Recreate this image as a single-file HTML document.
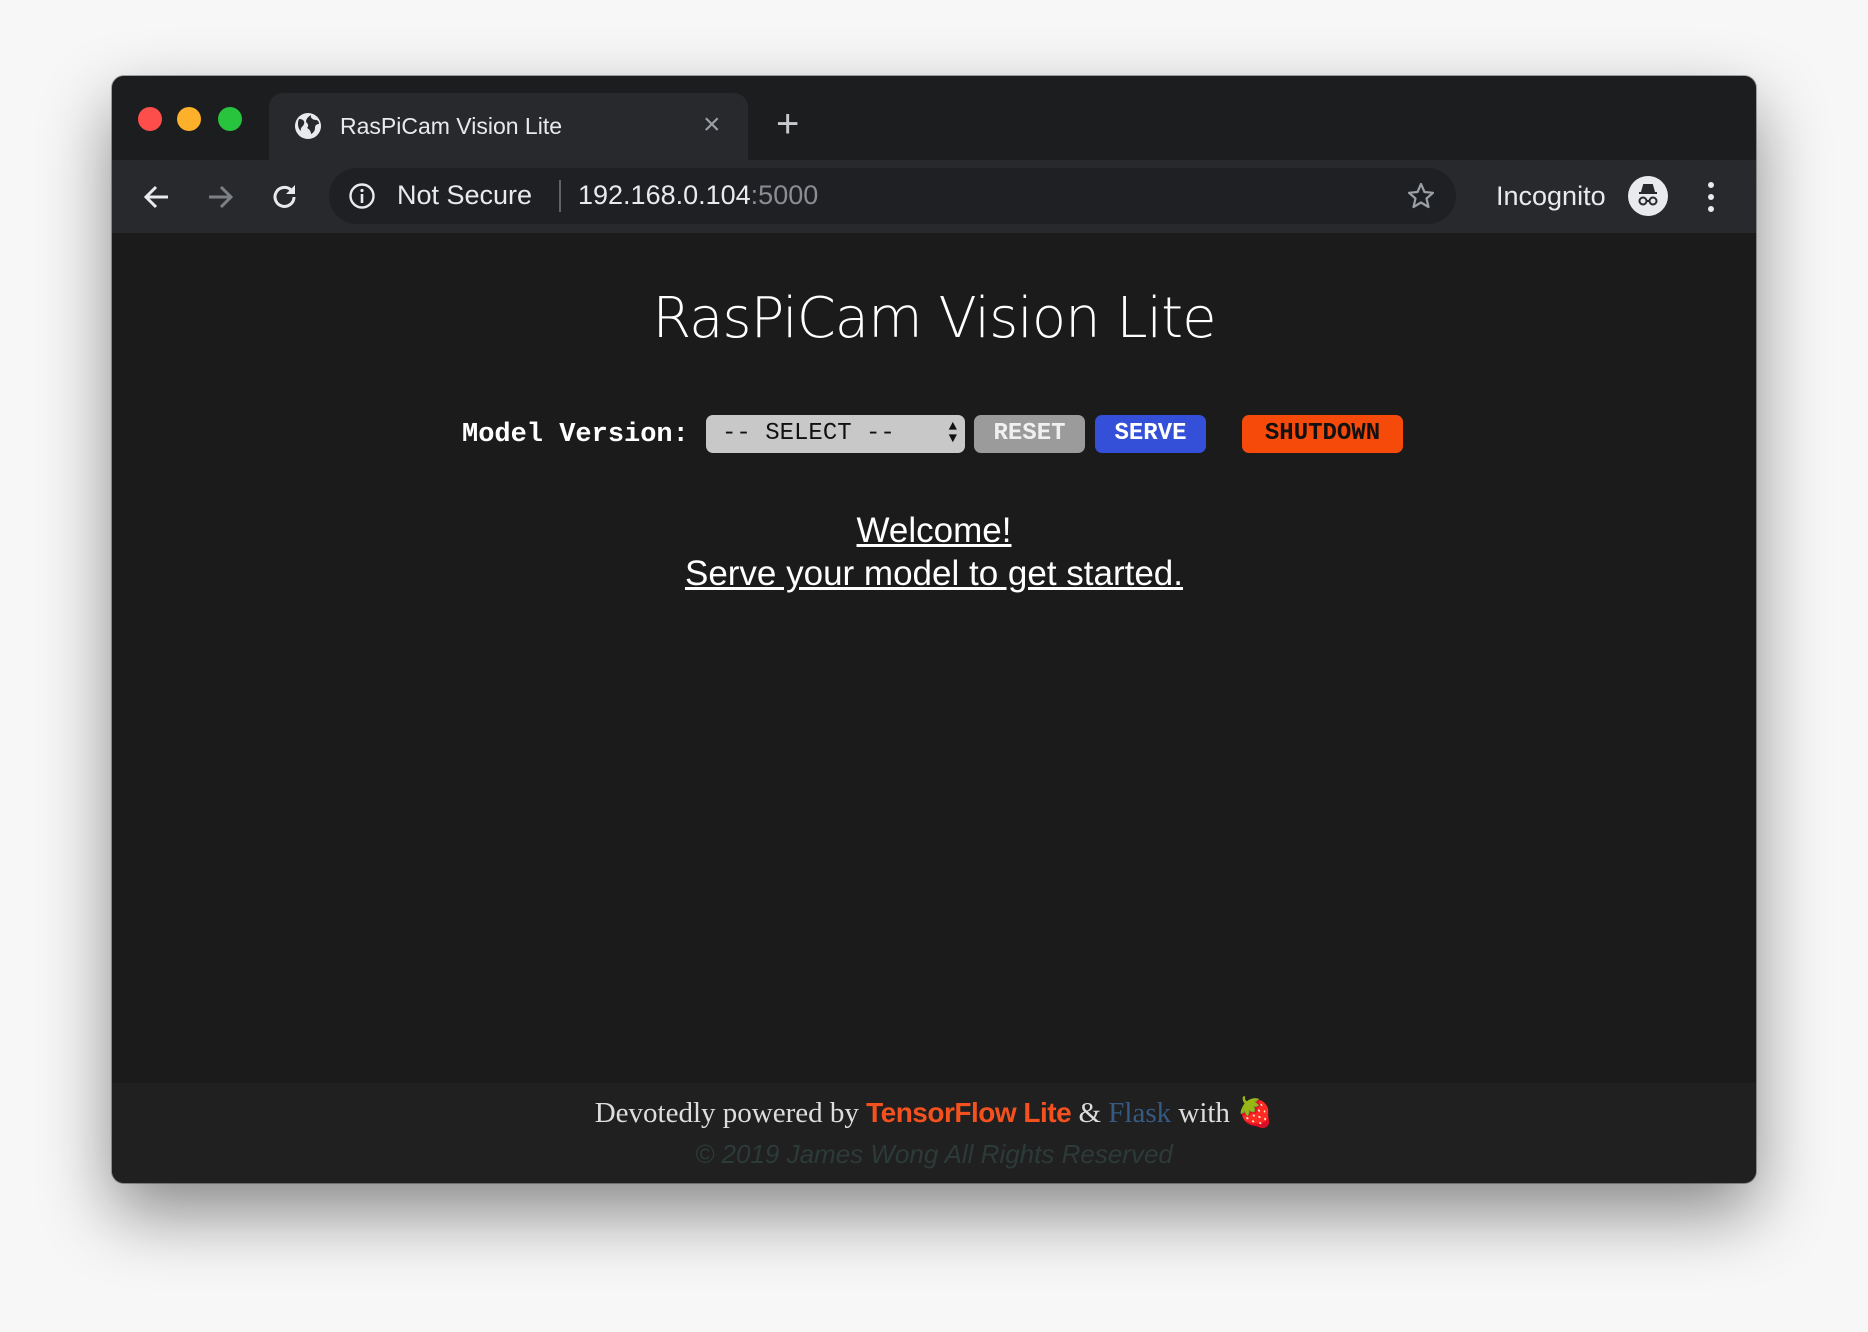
<!DOCTYPE html>
<html><head><meta charset="utf-8"><style>
*{margin:0;padding:0;box-sizing:border-box}
body{width:1868px;height:1332px;background:#f7f7f7;position:relative;overflow:hidden;font-family:"Liberation Sans",sans-serif}
.win{position:absolute;left:112px;top:76px;width:1644px;height:1107px;border-radius:12px;background:#1b1b1b;overflow:hidden;box-shadow:0 30px 70px rgba(0,0,0,.45),0 0 0 1px rgba(0,0,0,.3)}
.tabbar{position:absolute;left:0;top:0;width:100%;height:84px;background:#1c1d1f}
.dot{position:absolute;top:31px;width:24px;height:24px;border-radius:50%}
.tab{position:absolute;left:157px;top:17px;width:479px;height:67px;background:#27292c;border-radius:14px 14px 0 0}
.tab .t{position:absolute;left:71px;top:20px;color:#e8eaed;font-size:23px}
.toolbar{position:absolute;left:0;top:84px;width:100%;height:73px;background:#27292c}
.omni{position:absolute;left:217px;top:8px;width:1127px;height:56px;border-radius:28px;background:#1f2023}
.txt{position:absolute;color:#e8eaed;font-size:27px}
.content{position:absolute;left:0;top:157px;width:100%;height:926px;background:#1b1b1b}
.footer{position:absolute;left:0;top:1007px;width:100%;height:100px;background:#202020}
.btn{position:absolute;top:415px;height:38px;border-radius:7px;font-family:"Liberation Mono",monospace;font-weight:bold;font-size:24px;text-align:center;line-height:38px}
</style></head><body>
<div class="win">
 <div class="tabbar">
  <div class="dot" style="left:26px;background:#fd4e4b"></div>
  <div class="dot" style="left:65px;background:#fdb02a"></div>
  <div class="dot" style="left:106px;background:#29c43d"></div>
  <div class="tab">
   <svg style="position:absolute;left:24px;top:18px" width="30" height="30" viewBox="0 0 30 30"><circle cx="15" cy="15" r="13" fill="#e8eaed"/><path d="M6 8c4 0 6 2 5 5s-4 3-3 7c-3-2-4-8-2-12zM18 4c-1 3 2 5 5 5 2 0 3 2 3 4-2 0-4 1-4 4s-2 5-4 6c0-3-2-5-4-6 2-2 1-4 0-5-2-1-1-5 4-8z" fill="#27292c"/></svg>
   <div class="t">RasPiCam Vision Lite</div>
   <div style="position:absolute;left:434px;top:15px;color:#9aa0a6;font-size:30px">×</div>
  </div>
  <div style="position:absolute;left:664px;top:26px;color:#c8cacd;font-size:40px;font-weight:300">+</div>
 </div>
 <div class="toolbar">
  <svg style="position:absolute;left:30px;top:22px" width="30" height="30" viewBox="0 0 30 30"><path d="M26 15H5M14 5L4 15l10 10" stroke="#e8eaed" stroke-width="3" fill="none"/></svg>
  <svg style="position:absolute;left:93px;top:22px" width="30" height="30" viewBox="0 0 30 30"><path d="M4 15h21M16 5l10 10-10 10" stroke="#7d8085" stroke-width="3" fill="none"/></svg>
  <svg style="position:absolute;left:158px;top:22px" width="30" height="30" viewBox="0 0 30 30"><path d="M24 15a9.5 9.5 0 1 1-3-7" stroke="#e8eaed" stroke-width="3" fill="none"/><path d="M25 3v9h-9z" fill="#e8eaed"/></svg>
  <div class="omni">
   <svg style="position:absolute;left:19px;top:14px" width="28" height="28" viewBox="0 0 28 28"><circle cx="14" cy="14" r="11.5" stroke="#e8eaed" stroke-width="2.4" fill="none"/><rect x="12.7" y="12" width="2.6" height="9" fill="#e8eaed"/><circle cx="14" cy="8.5" r="1.6" fill="#e8eaed"/></svg>
   <div class="txt" style="left:68px;top:12px">Not Secure</div>
   <div style="position:absolute;left:230px;top:12px;width:2px;height:32px;background:#5f6368"></div>
   <div class="txt" style="left:249px;top:12px">192.168.0.104<span style="color:#8a8d92">:5000</span></div>
   <svg style="position:absolute;left:1077px;top:13px" width="30" height="30" viewBox="0 0 30 30"><path d="M15 3l3.5 8 8.5.8-6.5 5.7 2 8.5L15 21.5 7.5 26l2-8.5L3 11.8l8.5-.8z" stroke="#9aa0a6" stroke-width="2.2" fill="none" stroke-linejoin="round"/></svg>
  </div>
  <div class="txt" style="left:1384px;top:21px">Incognito</div>
  <div style="position:absolute;left:1516px;top:16px;width:40px;height:40px;border-radius:50%;background:#e8eaed"><svg width="40" height="40" viewBox="0 0 40 40"><path d="M11 17h18M14 16l2-7h8l2 7z" stroke="#27292c" stroke-width="2" fill="#27292c"/><circle cx="15" cy="25" r="3.5" stroke="#27292c" stroke-width="2" fill="none"/><circle cx="25" cy="25" r="3.5" stroke="#27292c" stroke-width="2" fill="none"/><path d="M18.5 25h3" stroke="#27292c" stroke-width="2"/></svg></div>
  <div style="position:absolute;left:1596px;top:22px;width:6px;height:30px"><div style="width:6px;height:6px;border-radius:50%;background:#e8eaed;margin-bottom:6px"></div><div style="width:6px;height:6px;border-radius:50%;background:#e8eaed;margin-bottom:6px"></div><div style="width:6px;height:6px;border-radius:50%;background:#e8eaed"></div></div>
 </div>
 <div class="content"></div>
 <div class="footer"></div>
</div>
<div style="position:absolute;left:0;width:1868px;top:286px;text-align:center;color:#fff;font-size:56px;font-family:'DejaVu Sans',sans-serif;font-weight:300;letter-spacing:-1px">RasPiCam Vision Lite</div>
<div style="position:absolute;left:462px;top:420px;color:#fff;font-family:'Liberation Mono',monospace;font-weight:bold;font-size:27px">Model Version:</div>
<div class="btn" style="left:706px;width:259px;background:#c8c8c8;color:#111;font-weight:normal;text-align:left;padding-left:16px">-- SELECT --<span style="position:absolute;right:8px;top:0;font-size:14px;line-height:12px;padding-top:6px">▲<br>▼</span></div>
<div class="btn" style="left:974px;width:111px;background:#9b9b9b;color:#f0f0f0">RESET</div>
<div class="btn" style="left:1095px;width:111px;background:#3450d8;color:#fff">SERVE</div>
<div class="btn" style="left:1242px;width:161px;background:#f64a0a;color:#111">SHUTDOWN</div>
<div style="position:absolute;left:0;width:1868px;top:509px;text-align:center;color:#fff;font-size:35px;line-height:43px;text-decoration:underline">Welcome! <br>Serve your model to get started.</div>
<div style="position:absolute;left:0;width:1868px;top:1096px;text-align:center;color:#ddd;font-family:'Liberation Serif',serif;font-size:29px">Devotedly powered by <span style="color:#f4511e;font-family:'Liberation Sans',sans-serif;font-weight:bold;font-size:28px;letter-spacing:-0.5px">TensorFlow Lite</span> &amp; <span style="color:#355a84">Flask</span> with <span style="color:#c62a2a">🍓</span></div>
<div style="position:absolute;left:0;width:1868px;top:1139px;text-align:center;color:#2c3b39;font-style:italic;font-size:26px">© 2019 James Wong All Rights Reserved</div>
</body></html>
